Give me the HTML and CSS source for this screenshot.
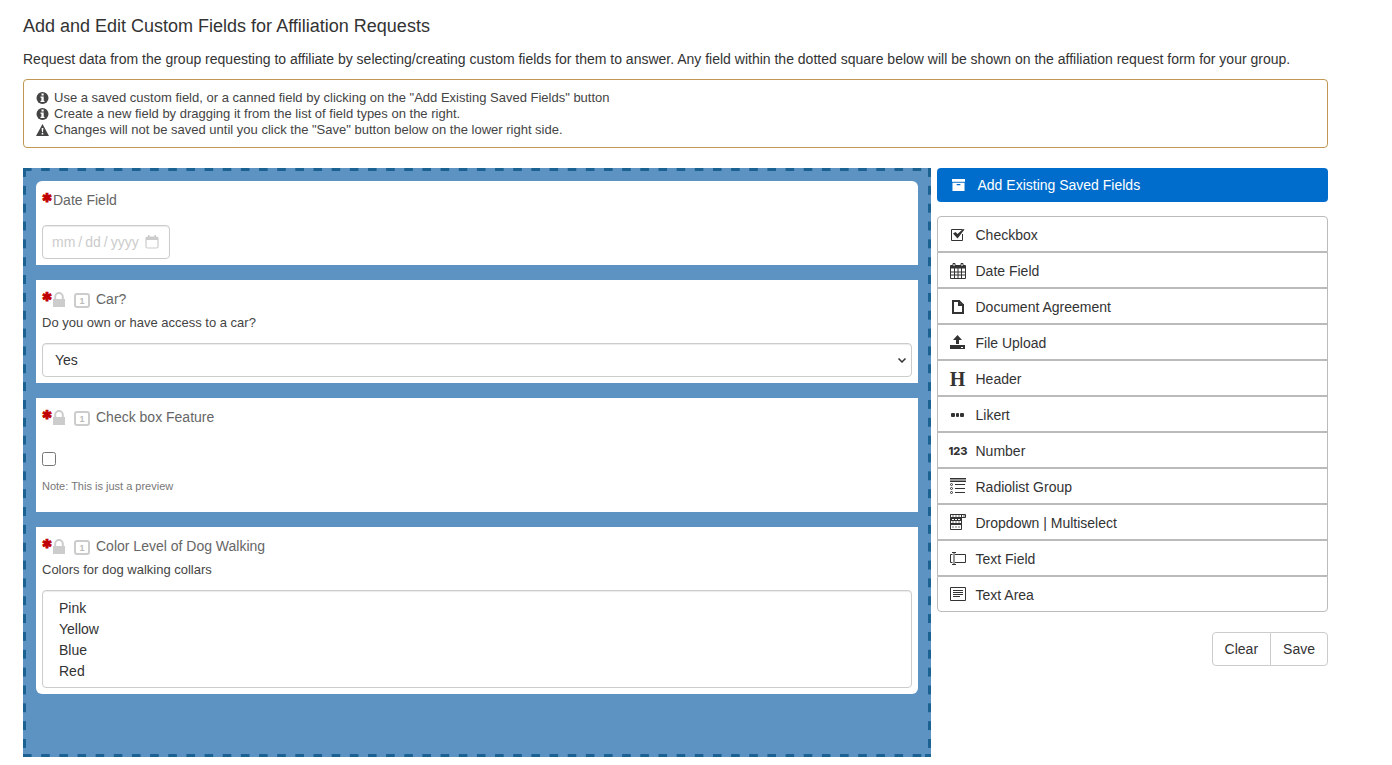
FILE: index.html
```html
<!DOCTYPE html>
<html lang="en">
<head>
    <meta charset="UTF-8">
    <meta name="viewport" content="width=device-width, initial-scale=1.0">
    <title>Custom Fields</title>
    <link rel="stylesheet" href="styles.css">
</head>
<body>
    <svg class="sprite" aria-hidden="true">
        <symbol id="icon-info" viewBox="0 0 12 12">
            <circle cx="6" cy="6" r="6"/>
            <path fill="#fff" d="M5 1.5h2.2v2H5zM4 4.5h3.2v4.3H8V10H4V8.800h.9V5.700H4z"/>
        </symbol>
        <symbol id="icon-warning" viewBox="0 0 13 12">
            <path d="M6.500 0 13 12H0z"/>
            <path fill="#fff" d="M5.600 4h1.800L7 8.200H6zM5.700 9h1.600v1.600H5.700z"/>
        </symbol>
        <symbol id="icon-lock" viewBox="0 0 12 15">
            <path d="M0 7h1.200V4.800a4.800 4.800 0 0 1 9.600 0V7H12v8H0zM3.200 7h5.600V4.800a2.800 2.800 0 0 0-5.600 0z"/>
        </symbol>
    </svg>

    <main class="page">
        <h1>Add and Edit Custom Fields for Affiliation Requests</h1>
        <p class="intro">Request data from the group requesting to affiliate by selecting/creating custom fields for them to answer. Any field within the dotted square below will be shown on the affiliation request form for your group.</p>

        <ul class="notice">
            <li><svg><use href="#icon-info"/></svg>Use a saved custom field, or a canned field by clicking on the "Add Existing Saved Fields" button</li>
            <li><svg><use href="#icon-info"/></svg>Create a new field by dragging it from the list of field types on the right.</li>
            <li><svg><use href="#icon-warning"/></svg>Changes will not be saved until you click the "Save" button below on the lower right side.</li>
        </ul>

        <div class="builder">
            <form class="stage">
                <div class="field">
                    <div class="field-head">
                        <span class="required">✱</span>
                        <label for="date-field">Date Field</label>
                    </div>
                    <div class="date-box">
                        <input type="date" id="date-field" class="control">
                        <svg viewBox="0 0 14 14"><rect x="1" y="2" width="12" height="11" rx="1.500" fill="none" stroke="currentColor" stroke-width="1.200"/><path fill="currentColor" d="M1 2h12v3H1zM3 0h1.500v3H3zM9.500 0H11v3H9.500z"/></svg>
                    </div>
                </div>

                <div class="field">
                    <div class="field-head">
                        <span class="required">✱</span>
                        <svg class="lock"><use href="#icon-lock"/></svg>
                        <span class="once">1</span>
                        <label for="car">Car?</label>
                    </div>
                    <p class="help">Do you own or have access to a car?</p>
                    <div class="select-box">
                        <select id="car" class="control">
                            <option>Yes</option>
                            <option>No</option>
                        </select>
                        <svg viewBox="0 0 8 5"><path fill="none" stroke="currentColor" stroke-width="1.500" d="M.5.5 4 4 7.500.5"/></svg>
                    </div>
                </div>

                <div class="field">
                    <div class="field-head">
                        <span class="required">✱</span>
                        <svg class="lock"><use href="#icon-lock"/></svg>
                        <span class="once">1</span>
                        <label for="feature">Check box Feature</label>
                    </div>
                    <input type="checkbox" id="feature" class="tick">
                    <p class="note">Note: This is just a preview</p>
                </div>

                <div class="field">
                    <div class="field-head">
                        <span class="required">✱</span>
                        <svg class="lock"><use href="#icon-lock"/></svg>
                        <span class="once">1</span>
                        <label for="colors">Color Level of Dog Walking</label>
                    </div>
                    <p class="help">Colors for dog walking collars</p>
                    <select id="colors" class="control multi" multiple size="4">
                        <option>Pink</option>
                        <option>Yellow</option>
                        <option>Blue</option>
                        <option>Red</option>
                    </select>
                </div>
            </form>

            <aside class="side">
                <button type="button" class="add-btn">
                    <svg viewBox="0 0 14 14"><path fill="currentColor" d="M0 0h14v3H0z"/><path fill="currentColor" fill-rule="evenodd" d="M.5 4h13v9H.5zM5 5.500v1.300h4V5.500z"/></svg>
                    Add Existing Saved Fields
                </button>

                <ul class="types">
                    <li>
                        <svg viewBox="0 0 18 18"><path fill="none" stroke="currentColor" d="M13.500 8v6.500h-11v-11h11"/><path fill="currentColor" d="M4 7.500 6.500 6l2 2L14 3l1.500.5L8.500 12.500z"/></svg>
                        Checkbox
                    </li>
                    <li>
                        <svg viewBox="0 0 18 18"><path fill="currentColor" d="M1 4a1 1 0 0 1 1-1h14a1 1 0 0 1 1 1v2.500H1z"/><path fill="none" stroke="currentColor" d="M1.500 6v10.500h15V6M1.500 10h15M1.500 13h15M5.500 6v10M9 6v10M12.500 6v10"/><path fill="#fff" stroke="currentColor" d="M4 1.500h2v3H4zM12 1.500h2v3h-2z"/></svg>
                        Date Field
                    </li>
                    <li>
                        <svg viewBox="0 0 18 18"><path fill="none" stroke="currentColor" stroke-width="2" d="M4 3h6l4 4v8H4z"/><path fill="currentColor" d="M9 2h2v4h4v2H9z"/></svg>
                        Document Agreement
                    </li>
                    <li>
                        <svg viewBox="0 0 18 18"><path fill="currentColor" d="m8.500 1 4.500 5h-3v4H7V6H4z"/><path fill="currentColor" fill-rule="evenodd" d="M1 11h15v4H1zM12 13v1h2v-1z"/></svg>
                        File Upload
                    </li>
                    <li><span class="glyph glyph-h">H</span>Header</li>
                    <li>
                        <svg viewBox="0 0 18 18"><g fill="currentColor"><rect x="2" y="7" width="4" height="4" rx="1"/><rect x="7" y="7" width="3" height="4" rx="1"/><rect x="11" y="7" width="4" height="4" rx="1"/></g></svg>
                        Likert
                    </li>
                    <li><span class="glyph glyph-num">123</span>Number</li>
                    <li>
                        <svg viewBox="0 0 18 18"><path fill="#999" d="M1 1h16v2H1z"/><path fill="none" stroke="currentColor" d="M1 .5h16M1 3.500h16M6 6.500h10M6 10.500h10M6 14.500h10"/><g fill="none" stroke="currentColor"><circle cx="2.500" cy="6.500" r="1"/><circle cx="2.500" cy="10.500" r="1"/><circle cx="2.500" cy="14.500" r="1"/></g></svg>
                        Radiolist Group
                    </li>
                    <li>
                        <svg viewBox="0 0 18 18"><path fill="#fff" stroke="currentColor" d="M1.500.5h11v15h-11z"/><path fill="#fff" stroke="currentColor" d="M1.500.5h15v3h-15z"/><path fill="currentColor" d="M1 4h12v3H1zM1 9h12v2H1zM12 0h1v4h-1zM14 1.500h2L15 3z"/><path fill="none" stroke="#777" stroke-dasharray="2 1" d="M3 2h8M3 8h8M3 13h8"/><path fill="none" stroke="#fff" stroke-dasharray="2 1" d="M3 5.500h8"/></svg>
                        Dropdown | Multiselect
                    </li>
                    <li>
                        <svg viewBox="0 0 18 18"><path fill="none" stroke="currentColor" d="M3.500 4.500h-2v8h2M6 4.500h10.500v8H6M3 2.500h4M3 14.500h4M5 2.500v12"/></svg>
                        Text Field
                    </li>
                    <li>
                        <svg viewBox="0 0 18 18"><path fill="none" stroke="currentColor" d="M1.500 1.500h15v13h-15zM4 4.500h10M4 6.500h10M4 8.500h10M4 10.500h7"/></svg>
                        Text Area
                    </li>
                </ul>

                <div class="actions">
                    <button type="button">Clear</button>
                    <button type="button">Save</button>
                </div>
            </aside>
        </div>
    </main>
</body>
</html>
```
FILE: styles.css
```css
* {
    box-sizing: border-box;
}
body {
    margin: 0;
    background: #fff;
    color: #333;
    font-family: "Liberation Sans", Arial, sans-serif;
    font-size: 14px;
    line-height: 20px;
}
h1, p, ul {
    margin: 0;
    padding: 0;
}
ul {
    list-style: none;
}
button, input, select {
    font: inherit;
    color: inherit;
}
.sprite {
    display: none;
}
.page {
    padding: 16px 64px 8px 23px;
}
h1 {
    font-size: 18px;
    font-weight: normal;
    line-height: 20px;
}
.intro {
    margin: 13px 0 10px;
}

/* notice */
.notice {
    padding: 10px 12px 9px;
    border: 1px solid #c09853;
    border-radius: 4px;
    color: #444;
    font-size: 13px;
    line-height: 16px;
}
.notice li {
    display: flex;
    align-items: center;
    gap: 5px;
}
.notice svg {
    width: 13px;
    height: 12px;
    flex: none;
    fill: #444;
}

/* layout */
.builder {
    display: grid;
    grid-template-columns: minmax(0, 1fr) 30%;
    gap: 6px;
    align-items: start;
    margin-top: 20px;
}
/* long dashes, drawn as one tile per side */
.stage {
    display: flex;
    flex-direction: column;
    gap: 15px;
    padding: 13px 13px 63px;
    background-color: #5c93c2;
    background-image:
        linear-gradient(#1b6293, #1b6293),
        linear-gradient(90deg, #1b6293 50%, transparent 50%),
        linear-gradient(90deg, #1b6293 50%, transparent 50%),
        linear-gradient(#1b6293 50%, transparent 50%),
        linear-gradient(#1b6293 50%, transparent 50%);
    background-position: right bottom, left top, left bottom, left top, right top;
    background-repeat: no-repeat, round no-repeat, round no-repeat, no-repeat round, no-repeat round;
    background-size: 6px 3px, 18px 3px, 18px 3px, 3px 18px, 3px 18px;
}

/* fields */
.field {
    padding: 6px;
    background: #fff;
}
.field:first-child {
    border-radius: 6px 6px 0 0;
}
.field:last-child {
    border-radius: 0 0 6px 6px;
}
.field-head {
    display: flex;
    align-items: center;
    height: 26px;
    color: #666;
}
.required {
    width: 11px;
    height: 24px;
    color: #c00000;
    font-family: "DejaVu Sans", sans-serif;
    font-size: 12px;
    font-weight: bold;
    -webkit-text-stroke: 1px #c00000;
}
.lock {
    width: 12px;
    height: 15px;
    fill: #ccc;
}
.once {
    width: 16px;
    height: 15px;
    margin: 2px 6px 0 9px;
    border: 2px solid #ccc;
    border-radius: 3px;
    color: #bbb;
    font-size: 9px;
    font-weight: bold;
    line-height: 12px;
    text-align: center;
}
.help {
    padding-top: 1px;
    color: #444;
    font-size: 13px;
}
.control {
    display: block;
    width: 100%;
    height: 34px;
    padding: 6px 12px;
    border: 1px solid #ccc;
    border-radius: 4px;
    outline: none;
    background: #fff;
    box-shadow: inset 0 1px 1px rgba(0,0,0,.08);
    appearance: none;
}
.date-box {
    position: relative;
    width: 128px;
    margin-top: 12px;
    color: #ccc;
}
.date-box .control {
    padding: 6px 8px;
}
.date-box svg {
    position: absolute;
    top: 10px;
    right: 11px;
    width: 14px;
    height: 14px;
}
.control::-webkit-datetime-edit-text {
    padding: 0 2px;
}
.control::-webkit-calendar-picker-indicator {
    display: none;
}
.select-box {
    position: relative;
    margin-top: 10px;
}
.select-box svg {
    position: absolute;
    top: 15px;
    right: 6px;
    width: 8px;
    height: 5px;
    pointer-events: none;
}
.multi {
    height: 98px;
    margin-top: 10px;
    padding: 9px 12px 3px;
    overflow: hidden;
}
.multi option {
    min-height: 21px;
    padding: 0 4px;
    line-height: 21px;
}
.tick {
    display: block;
    width: 14px;
    height: 14px;
    margin: 22px 0 10px;
}
.note {
    margin-bottom: 10px;
    color: #777;
    font-size: 11px;
}

/* right side */
.add-btn {
    display: flex;
    align-items: center;
    gap: 13px;
    width: 100%;
    height: 34px;
    padding: 0 15px;
    border: 0;
    border-radius: 4px;
    background: #006dcc;
    color: #fff;
    cursor: pointer;
}
.add-btn svg {
    width: 13px;
    height: 13px;
}
.types {
    margin: 14px 0 20px;
}
.types li {
    display: flex;
    align-items: center;
    gap: 9px;
    height: 36px;
    padding: 1px 11px 0;
    border: 1px solid #bbb;
    cursor: move;
}
.types li:first-child {
    border-radius: 4px 4px 0 0;
}
.types li:last-child {
    border-radius: 0 0 4px 4px;
}
.types svg, .glyph {
    flex: none;
    width: 18px;
    height: 18px;
}
.glyph {
    line-height: 18px;
    text-align: center;
}
.glyph-h {
    font-family: "Liberation Serif", serif;
    font-size: 20px;
    font-weight: bold;
}
.glyph-num {
    font-family: Inter, sans-serif;
    font-size: 11px;
    font-weight: 800;
}
.actions {
    display: flex;
    justify-content: flex-end;
}
.actions button {
    height: 34px;
    padding: 0 12px;
    border: 1px solid #ccc;
    background: #fff;
    cursor: pointer;
}
.actions button:first-child {
    border-radius: 4px 0 0 4px;
}
.actions button:last-child {
    margin-left: -1px;
    border-radius: 0 4px 4px 0;
}
```
